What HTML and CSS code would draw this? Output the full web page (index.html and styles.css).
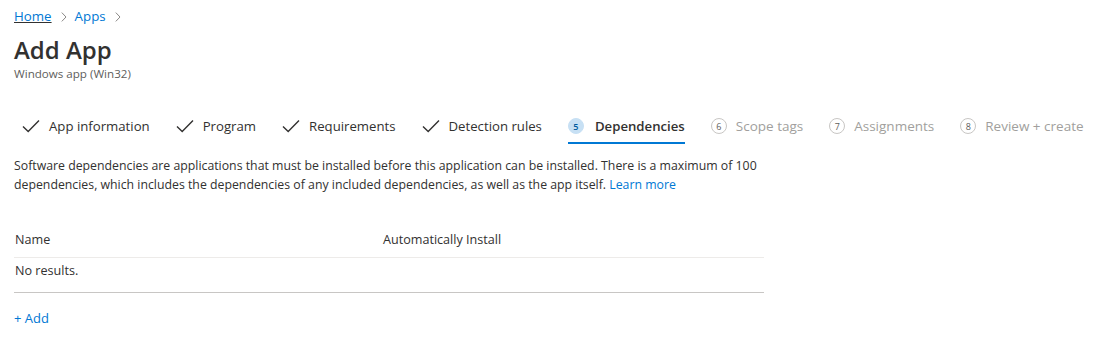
FILE: index.html
```html
<!DOCTYPE html>
<html lang="en">
<head>
    <meta charset="UTF-8">
    <title>Add App</title>
    <link rel="stylesheet" href="styles.css">
</head>
<body>

    <!-- Breadcrumb -->
    <div class="breadcrumb">
        <a class="crumb current" href="#">Home</a>
        <svg class="chevron" width="6" height="10" viewBox="0 0 6 10"><path d="M0.8 0.6 L5 5 L0.8 9.4" fill="none" stroke="#8a8886" stroke-width="1"/></svg>
        <a class="crumb" href="#">Apps</a>
        <svg class="chevron" width="6" height="10" viewBox="0 0 6 10"><path d="M0.8 0.6 L5 5 L0.8 9.4" fill="none" stroke="#8a8886" stroke-width="1"/></svg>
    </div>

    <h1 class="title">Add App</h1>
    <div class="subtitle">Windows app (Win32)</div>

    <!-- Wizard steps -->
    <div class="steps">
        <div class="step done">
            <svg class="check" width="18" height="14" viewBox="0 0 18 14"><path d="M1 7.5 L6.2 12.5 L17 1.5" fill="none" stroke="#323130" stroke-width="1.4"/></svg>
            <span>App information</span>
        </div>
        <div class="step done">
            <svg class="check" width="18" height="14" viewBox="0 0 18 14"><path d="M1 7.5 L6.2 12.5 L17 1.5" fill="none" stroke="#323130" stroke-width="1.4"/></svg>
            <span>Program</span>
        </div>
        <div class="step done">
            <svg class="check" width="18" height="14" viewBox="0 0 18 14"><path d="M1 7.5 L6.2 12.5 L17 1.5" fill="none" stroke="#323130" stroke-width="1.4"/></svg>
            <span>Requirements</span>
        </div>
        <div class="step done">
            <svg class="check" width="18" height="14" viewBox="0 0 18 14"><path d="M1 7.5 L6.2 12.5 L17 1.5" fill="none" stroke="#323130" stroke-width="1.4"/></svg>
            <span>Detection rules</span>
        </div>
        <div class="step active">
            <span class="num">5</span>
            <span>Dependencies</span>
        </div>
        <div class="step todo">
            <span class="num">6</span>
            <span>Scope tags</span>
        </div>
        <div class="step todo">
            <span class="num">7</span>
            <span>Assignments</span>
        </div>
        <div class="step todo">
            <span class="num">8</span>
            <span>Review + create</span>
        </div>
    </div>

    <p class="info">
        Software dependencies are applications that must be installed before this application can be installed. There is a maximum of 100
        dependencies, which includes the dependencies of any included dependencies, as well as the app itself. <a href="#">Learn more</a>
    </p>

    <!-- Dependencies list -->
    <div class="grid">
        <div class="row head">
            <div>Name</div>
            <div>Automatically Install</div>
        </div>
        <div class="row empty">
            <div>No results.</div>
        </div>
    </div>

    <a class="add-link" href="#">+ Add</a>

</body>
</html>
```

FILE: styles.css
```css
body {
    margin: 0;
    padding: 6px 14px 0 14px;
    font-family: "Open Sans", "Noto Sans", sans-serif;
    font-size: 12.3px;
    color: #323130;
    background-color: #ffffff;
}
a {
    color: #0078d4;
    text-decoration: none;
}
.breadcrumb {
    display: flex;
    align-items: center;
    height: 20px;
    font-size: 13.3px;
}
.crumb.current {
    text-decoration: underline;
    text-decoration-color: #323130;
}
.chevron {
    margin: 2px 8px 0 9px;
}
.title {
    margin: 8px 0 0 0;
    font-size: 24px;
    font-weight: 600;
    line-height: 32px;
}
.subtitle {
    font-size: 11.6px;
    color: #605e5c;
    line-height: 16px;
}
.steps {
    display: flex;
    margin-top: 28px;
    padding-left: 8px;
    gap: 26px;
}
.step {
    display: flex;
    align-items: center;
    gap: 9px;
    height: 32px;
    border-bottom: 2px solid transparent;
    font-size: 13.2px;
    white-space: nowrap;
}
.step.active {
    border-bottom-color: #0078d4;
    font-weight: 600;
    gap: 11px;
}
.step.todo {
    color: #a19f9d;
    font-size: 13.5px;
}
.num {
    display: inline-flex;
    justify-content: center;
    align-items: center;
    width: 16px;
    height: 16px;
    border-radius: 50%;
    font-size: 9px;
    font-weight: 400;
    box-sizing: border-box;
    border: 1px solid #c8c6c4;
    color: #605e5c;
}
.active .num {
    background-color: #c7e0f4;
    border-color: #c7e0f4;
    color: #005a9e;
    font-weight: 600;
}
.info {
    max-width: 752px;
    margin: 12px 0 0 0;
    line-height: 19px;
}
.grid {
    width: 750px;
    margin-top: 28px;
    font-size: 12.6px;
}
.row {
    display: grid;
    grid-template-columns: 368px 1fr;
    padding-left: 1px;
}
.row.head {
    height: 35px;
    align-items: center;
    border-bottom: 1px solid #edebe9;
}
.row.empty {
    height: 35px;
    align-items: start;
    padding-top: 4px;
    box-sizing: border-box;
    border-bottom: 1px solid #c8c6c4;
}
.add-link {
    display: inline-block;
    margin-top: 16px;
    font-size: 13px;
}
```
